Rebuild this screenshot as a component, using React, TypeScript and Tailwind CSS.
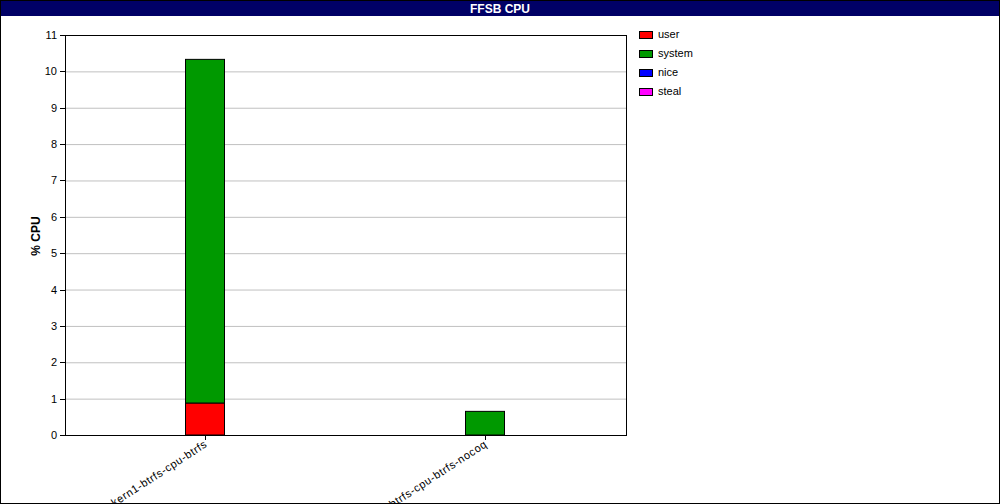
import React from "react";

const U = 400 / 11;
const y = (v: number) => 435 - v * U;

const legend = [
  { name: "user", color: "bg-[#ff0000]" },
  { name: "system", color: "bg-[#009900]" },
  { name: "nice", color: "bg-[#0000ff]" },
  { name: "steal", color: "bg-[#ff00ff]" },
];

export default function App() {
  const font = { fontFamily: '"Liberation Sans", Arial, sans-serif' };
  return (
    <div className="w-[1000px] h-[504px] border border-black bg-white flex flex-col overflow-hidden" style={font}>
      <div className="h-[15px] bg-[#000066] text-white text-[12px] font-bold flex items-center justify-center leading-none">
        FFSB CPU
      </div>
      <div className="flex flex-1">
        <svg width="630" height="487" viewBox="0 16 630 487" className="shrink-0" fontSize="11" fontFamily='"Liberation Sans", Arial, sans-serif'>
          {Array.from({ length: 12 }, (_, i) => (
            <g key={i}>
              {i > 0 && i < 11 && <line x1="64" x2="625" y1={y(i) + 0.5} y2={y(i) + 0.5} stroke="#c0c0c0" />}
              <line x1="59" x2="64" y1={Math.round(y(i)) + 0.5} y2={Math.round(y(i)) + 0.5} stroke="#000" />
              <text x="56" y={y(i) + 4} textAnchor="end" fill="#000">{i}</text>
            </g>
          ))}
          <rect x="184.5" y={y(0.88)} width="39" height={0.88 * U} fill="#ff0000" stroke="#000" />
          <rect x="184.5" y={y(10.33)} width="39" height={(10.33 - 0.88) * U} fill="#009900" stroke="#000" />
          <rect x="464.5" y={y(0.65)} width="39" height={0.65 * U} fill="#009900" stroke="#000" />
          <rect x="64.5" y="35.5" width="561" height="400" fill="none" stroke="#000" />
          <line x1="204.5" x2="204.5" y1="435" y2="440" stroke="#000" />
          <line x1="484.5" x2="484.5" y1="435" y2="440" stroke="#000" />
          <text transform="translate(207 446) rotate(-33)" textAnchor="end" fill="#000" letterSpacing="0.6">kern1-btrfs-cpu-btrfs</text>
          <text transform="translate(487 446) rotate(-33)" textAnchor="end" fill="#000" letterSpacing="0.6">kern1-btrfs-cpu-btrfs-nocoq</text>
          <text transform="translate(39 236) rotate(-90)" textAnchor="middle" fontWeight="bold" fontSize="12" fill="#000">% CPU</text>
        </svg>
        <div className="pl-[8px] pt-[12px] flex flex-col gap-[6px]">
          {legend.map((l) => (
            <div key={l.name} className="flex items-center gap-[5px] h-[13px] text-[11px] text-black">
              <span className={`w-[14px] h-[8px] border border-black ${l.color}`} />
              {l.name}
            </div>
          ))}
        </div>
      </div>
    </div>
  );
}
